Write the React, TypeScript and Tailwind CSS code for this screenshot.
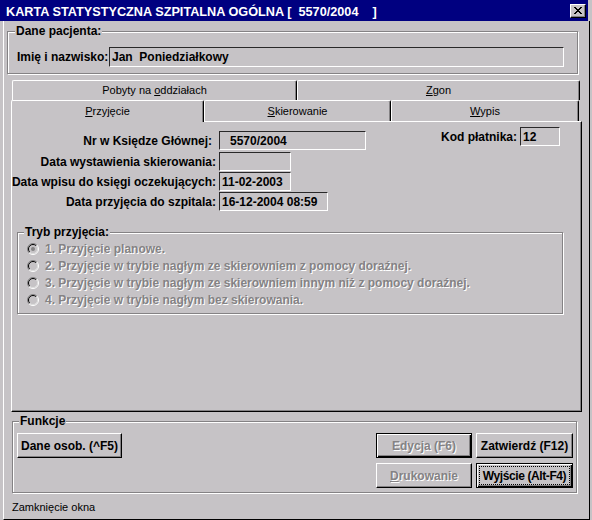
import type { ReactNode } from 'react';

// Win95-style "Karta statystyczna" dialog

function Groupbox({ legend, legendPos, className, children }: { legend: string; legendPos: string; className: string; children?: ReactNode }) {
  return (
    <div className={`relative border border-[#848284] shadow-[inset_1px_1px_0_#fff,1px_1px_0_#fff] ${className}`}>
      <span className={`absolute -top-[8px] bg-[#c6c3c6] px-[1px] text-[12px] font-bold leading-[14px] ${legendPos}`}>{legend}</span>
      {children}
    </div>
  );
}

function Tab({ children, className }: { children: ReactNode; className: string }) {
  return (
    <div
      className={`flex items-center justify-center rounded-t-[2px] border-l border-t border-r border-l-white border-t-white border-r-black text-[11px] leading-[13px] shadow-[inset_-1px_0_0_#848284] ${className}`}
    >
      {children}
    </div>
  );
}

function Field({ children, className }: { children?: ReactNode; className: string }) {
  return (
    <div
      className={`flex h-[19px] items-center whitespace-pre border border-l-[#292829] border-t-[#292829] border-r-white border-b-white text-[12px] font-bold ${className}`}
    >
      {children}
    </div>
  );
}

function Row({ label, children, labelPad = 'pr-0', className = '' }: { label: string; children: ReactNode; labelPad?: string; className?: string }) {
  return (
    <div className={`flex h-[19px] items-center ${className}`}>
      <div className={`flex w-[204px] justify-end whitespace-nowrap text-[12px] font-bold ${labelPad}`}>{label}</div>
      <div className="ml-[3px]">{children}</div>
    </div>
  );
}

function Radio({ checked }: { checked?: boolean }) {
  return (
    <svg width="12" height="12" viewBox="0 0 12 12" className="shrink-0">
      <circle cx="6" cy="6" r="5" fill="#c6c3c6" />
      <path d="M2.1 9.9A5.5 5.5 0 0 1 9.9 2.1" stroke="#848284" fill="none" />
      <path d="M9.9 2.1A5.5 5.5 0 0 1 2.1 9.9" stroke="#fff" fill="none" />
      <path d="M2.8 9.2A4.5 4.5 0 0 1 9.2 2.8" stroke="#000" fill="none" />
      <path d="M9.2 2.8A4.5 4.5 0 0 1 2.8 9.2" stroke="#dfdfdf" fill="none" />
      {checked && <circle cx="6" cy="6" r="2" fill="#848284" />}
    </svg>
  );
}

const disabledText = 'text-[#848284] [text-shadow:1px_1px_0_#fff]';

export default function App() {
  const modes = [
    '1. Przyjęcie planowe.',
    '2. Przyjęcie w trybie nagłym ze skierowniem z pomocy doraźnej.',
    '3. Przyjęcie w trybie nagłym ze skierowniem innym niż z pomocy doraźnej.',
    '4. Przyjęcie w trybie nagłym bez skierowania.',
  ];

  return (
    <div className="flex h-[520px] w-[592px] flex-col overflow-hidden bg-[#c6c3c6] font-['Liberation_Sans',Arial,sans-serif] text-black">
      {/* title bar */}
      <div className="flex h-[21px] w-[588px] shrink-0 items-center justify-between bg-[#000080] pl-[6px] pr-[2px]">
        <span className="whitespace-pre pt-[3px] text-[12.7px] font-bold leading-[14px] text-white">KARTA STATYSTYCZNA SZPITALNA OGÓLNA [  5570/2004    ]</span>
        <div className="flex h-[14px] w-[16px] items-center justify-center border border-l-white border-t-white border-r-black border-b-black bg-[#c6c3c6] shadow-[inset_-1px_-1px_0_#848284]">
          <svg width="8" height="7" viewBox="0 0 8 7" className="ml-[-1px]">
            <path d="M0 0h2v1H0zM6 0h2v1H6zM1 1h2v1H1zM5 1h2v1H5zM2 2h4v1H2zM3 3h2v1H3zM2 4h4v1H2zM1 5h2v1H1zM5 5h2v1H5zM0 6h2v1H0zM6 6h2v1H6z" fill="#000" />
          </svg>
        </div>
      </div>

      {/* body */}
      <div className="ml-[3px] flex w-[587px] flex-1 flex-col border-b border-l border-r border-b-black border-l-white border-r-black">
        <Groupbox legend="Dane pacjenta:" legendPos="left-[7px]" className="ml-[3px] mt-[10px] h-[43px] w-[571px]">
          <div className="flex items-center pl-[9px] pt-[15px]">
            <span className="w-[92px] whitespace-nowrap text-[12px] font-bold">Imię i nazwisko:</span>
            <div className="flex h-[20px] w-[455px] items-center whitespace-pre border border-l-[#292829] border-t-[#292829] border-r-white border-b-white pl-[2px] text-[12px] font-bold">
              Jan  Poniedziałkowy
            </div>
          </div>
        </Groupbox>

        {/* tabs */}
        <div className="ml-[7px] mt-[6px] w-[571px]">
          <div className="flex h-[20px] pl-[1px]">
            <Tab className="w-[285px]">
              <span>
                Pobyty na <u>o</u>ddziałach
              </span>
            </Tab>
            <Tab className="w-[283px]">
              <span>
                <u>Z</u>gon
              </span>
            </Tab>
          </div>
          <div className="flex h-[21px] items-end">
            <Tab className="relative z-10 -mb-[1px] h-[22px] w-[193px] bg-[#c6c3c6]">
              <span>
                <u>P</u>rzyjęcie
              </span>
            </Tab>
            <Tab className="h-[21px] w-[187px]">
              <span>
                <u>S</u>kierowanie
              </span>
            </Tab>
            <Tab className="h-[21px] w-[188px]">
              <span>
                <u>W</u>ypis
              </span>
            </Tab>
          </div>

          <div className="flex h-[291px] flex-col border border-b-black border-l-white border-r-black border-t-white shadow-[inset_-1px_-1px_0_#848284]">
            <div className="flex">
              <div className="flex flex-col">
                <Row label="Nr w Księdze Głównej:" labelPad="pr-[4px]" className="mt-[9px]">
                  <Field className="w-[147px] pl-[10px]">5570/2004</Field>
                </Row>
                <Row label="Data wystawienia skierowania:" className="mt-[2px]">
                  <Field className="w-[72px]" />
                </Row>
                <Row label="Data wpisu do księgi oczekujących:" className="mt-[1px]">
                  <Field className="w-[72px] pl-[2px]">11-02-2003</Field>
                </Row>
                <Row label="Data przyjęcia do szpitala:" className="mt-[1px]">
                  <Field className="w-[109px] pl-[2px]">16-12-2004 08:59</Field>
                </Row>
              </div>
              <div className="ml-auto mr-[21px] mt-[5px] flex h-[19px] items-center self-start">
                <span className="text-[12px] font-bold">Kod płatnika:</span>
                <Field className="ml-[3px] w-[40px] pl-[2px]">12</Field>
              </div>
            </div>

            <Groupbox legend="Tryb przyjęcia:" legendPos="left-[6px]" className="ml-[5px] mt-[21px] h-[82px] w-[546px]">
              <div className="flex flex-col pl-[9px] pt-[7px]">
                {modes.map((m, i) => (
                  <div key={m} className="flex h-[17px] items-center gap-[6px]">
                    <Radio checked={i === 0} />
                    <span className={`whitespace-nowrap text-[12px] font-bold ${disabledText}`}>{m}</span>
                  </div>
                ))}
              </div>
            </Groupbox>
          </div>
        </div>

        {/* functions */}
        <Groupbox legend="Funkcje" legendPos="left-[6px]" className="ml-[8px] mt-[9px] h-[72px] w-[565px]">
          <div className="flex justify-between pl-[4px] pr-[3px] pt-[11px]">
            <button className="h-[25px] w-[105px] border border-b-black border-l-white border-r-black border-t-white text-[12px] font-bold shadow-[inset_-1px_-1px_0_#848284]">
              Dane osob. (^F5)
            </button>
            <div className="grid grid-cols-[96px_97px] gap-x-[4px] gap-y-[5px]">
              <button className={`h-[25px] border border-black text-[12px] font-bold shadow-[inset_1px_1px_0_#fff,inset_-1px_-1px_0_#000,inset_-2px_-2px_0_#848284] ${disabledText}`}>
                Edycja (F6)
              </button>
              <button className="h-[25px] whitespace-nowrap border border-b-black border-l-white border-r-black border-t-white text-[12px] font-bold shadow-[inset_-1px_-1px_0_#848284]">
                Zatwierdź (F12)
              </button>
              <button className={`h-[25px] border border-b-black border-l-white border-r-black border-t-white text-[12px] font-bold shadow-[inset_-1px_-1px_0_#848284] ${disabledText}`}>
                <u>D</u>rukowanie
              </button>
              <button className="h-[25px] border border-black p-[2px] text-[12px] font-bold shadow-[inset_1px_1px_0_#fff,inset_-1px_-1px_0_#000,inset_-2px_-2px_0_#848284]">
                <div className="flex h-full w-full items-center justify-center whitespace-nowrap border border-dotted border-black tracking-[-0.4px]">Wyjście (Alt-F4)</div>
              </button>
            </div>
          </div>
        </Groupbox>

        <div className="ml-[8px] mt-[7px] h-[16px] text-[11px] leading-[14px]">Zamknięcie okna</div>
      </div>
    </div>
  );
}
